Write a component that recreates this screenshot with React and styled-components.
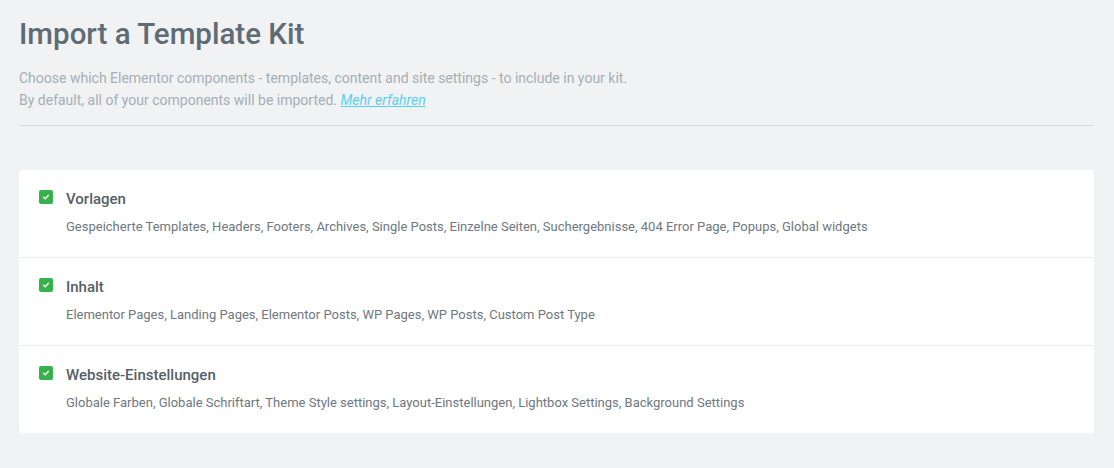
import React from "react";
import styled, { createGlobalStyle } from "styled-components";

const Global = createGlobalStyle`
  html, body { margin: 0; padding: 0; background: #f1f2f3; }
  body { font-family: Roboto, "Noto Sans", Arial, sans-serif; -webkit-font-smoothing: antialiased; }
  * { box-sizing: border-box; }
`;

const Page = styled.div`
  padding: 16px 20px 34px 19px;
  width: 1114px;
`;

const Header = styled.header`
  padding-bottom: 14px;
  border-bottom: 1px solid #d5d8dc;
`;

const Title = styled.h1`
  margin: 0;
  font-size: 29.5px;
  line-height: 36px;
  font-weight: 500;
  color: #5f6b75;
`;

const Description = styled.p`
  margin: 15px 0 0;
  font-size: 14px;
  line-height: 22px;
  color: #a4afb7;
`;

const Link = styled.a`
  color: #58d0f5;
  font-style: italic;
  text-decoration: underline;
`;

const Card = styled.section`
  margin-top: 44px;
  background: #fff;
  border-radius: 3px;
`;

const Row = styled.div`
  display: flex;
  gap: 13px;
  padding: 20px 20px 0;
  height: ${(p) => (p.$last ? "87px" : "88px")};
  border-bottom: ${(p) => (p.$last ? "none" : "1px solid #eceef0")};
`;

const Box = styled.span`
  flex: none;
  width: 14px;
  height: 14px;
  border-radius: 2px;
  background: #36b24a;
  display: flex;
  align-items: center;
  justify-content: center;
`;

const Content = styled.div`
  display: flex;
  flex-direction: column;
`;

const RowTitle = styled.div`
  font-size: 15px;
  line-height: 18px;
  font-weight: 500;
  color: #556068;
`;

const RowText = styled.div`
  margin-top: 11px;
  font-size: 13px;
  line-height: 16px;
  color: #6d7882;
`;

const Check = () => (
  <Box>
    <svg width="8" height="8" viewBox="0 0 8 8">
      <path d="M1.5 4.2 L3.2 5.8 L6.5 2.2" fill="none" stroke="#fff" strokeWidth="1.3" strokeLinecap="round" strokeLinejoin="round" />
    </svg>
  </Box>
);

const rows = [
  {
    title: "Vorlagen",
    text: "Gespeicherte Templates, Headers, Footers, Archives, Single Posts, Einzelne Seiten, Suchergebnisse, 404 Error Page, Popups, Global widgets",
  },
  {
    title: "Inhalt",
    text: "Elementor Pages, Landing Pages, Elementor Posts, WP Pages, WP Posts, Custom Post Type",
  },
  {
    title: "Website-Einstellungen",
    text: "Globale Farben, Globale Schriftart, Theme Style settings, Layout-Einstellungen, Lightbox Settings, Background Settings",
  },
];

export default function App() {
  return (
    <>
      <Global />
      <Page>
        <Header>
          <Title>Import a Template Kit</Title>
          <Description>
            Choose which Elementor components - templates, content and site settings - to include in your kit.
            <br />
            By default, all of your components will be imported. <Link href="#">Mehr erfahren</Link>
          </Description>
        </Header>
        <Card>
          {rows.map((r, i) => (
            <Row key={r.title} $last={i === rows.length - 1}>
              <Check />
              <Content>
                <RowTitle>{r.title}</RowTitle>
                <RowText>{r.text}</RowText>
              </Content>
            </Row>
          ))}
        </Card>
      </Page>
    </>
  );
}
